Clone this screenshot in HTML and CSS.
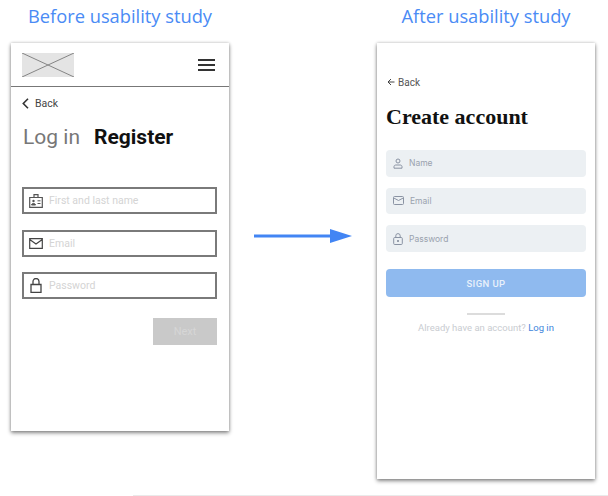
FILE: index.html
```html
<!DOCTYPE html>
<html lang="en">
<head>
    <meta charset="UTF-8">
    <meta name="viewport" content="width=device-width, initial-scale=1.0">
    <title>Before and after usability study</title>
    <link rel="stylesheet" href="styles.css">
</head>
<body>

<div class="board">
    <!-- Before: wireframe -->
    <section class="study">
        <h2 class="study-title">Before usability study</h2>
        <div class="phone phone-before">
            <div class="wire-header">
                <svg class="wire-logo" width="52" height="24" viewBox="0 0 52 24">
                    <rect width="52" height="24" fill="#e4e4e4"/>
                    <path d="M0 0L52 24M0 24L52 0" stroke="#858585" stroke-width="1" fill="none"/>
                </svg>
                <svg class="wire-menu" width="18" height="14" viewBox="0 0 18 14">
                    <path d="M0 2H17M0 7H17M0 12H17" stroke="#333" stroke-width="2" fill="none"/>
                </svg>
            </div>
            <div class="wire-body">
                <div class="wire-back">
                    <svg width="7" height="11" viewBox="0 0 7 11">
                        <path d="M6 .8L1.300 5.500 6 10.200" stroke="#333" stroke-width="1.600" fill="none"/>
                    </svg>
                    <span>Back</span>
                </div>
                <div class="wire-tabs">
                    <span class="wire-tab">Log in</span>
                    <span class="wire-tab wire-tab-active">Register</span>
                </div>
                <div class="wire-form">
                    <div class="wire-field">
                        <svg width="14" height="15" viewBox="0 0 14 15">
                            <path d="M.7 4.500h12.600v9.800H.7zM5 4.500V1.600h4v2.900" stroke="#555" stroke-width="1.200" fill="none"/>
                            <circle cx="4.500" cy="8" r="1.200" fill="#555"/>
                            <path d="M2.500 12c0-2 4-2 4 0zM8.500 7.800h3M8.500 10.500h3" stroke="#555" stroke-width="1" fill="#555"/>
                        </svg>
                        <span>First and last name</span>
                    </div>
                    <div class="wire-field">
                        <svg width="14" height="11" viewBox="0 0 14 11">
                            <path d="M.7.700h12.600v9.600H.7zM.7 1.500L7 6l6.300-4.500" stroke="#444" stroke-width="1.200" fill="none"/>
                        </svg>
                        <span>Email</span>
                    </div>
                    <div class="wire-field">
                        <svg width="12" height="15" viewBox="0 0 12 15">
                            <path d="M1 6.500h10v7.800H1zM3 6.500V3.500a3 3 0 0 1 6 0v3" stroke="#444" stroke-width="1.300" fill="none"/>
                        </svg>
                        <span>Password</span>
                    </div>
                </div>
                <div class="wire-actions">
                    <button class="wire-next">Next</button>
                </div>
            </div>
        </div>
    </section>

    <div class="arrow-col">
        <svg width="98" height="14" viewBox="0 0 98 14">
            <path d="M0 5.500h76v3H0z" fill="#4285f4"/>
            <path d="M76 0l22 7-22 7z" fill="#4285f4"/>
        </svg>
    </div>

    <!-- After: hi-fi -->
    <section class="study">
        <h2 class="study-title">After usability study</h2>
        <div class="phone phone-after">
            <div class="back-link">
                <svg width="8" height="8" viewBox="0 0 8 8">
                    <path d="M7.500 4H1M4 1L1 4l3 3" stroke="#444" stroke-width="1" fill="none"/>
                </svg>
                <span>Back</span>
            </div>
            <h1 class="after-heading">Create account</h1>
            <div class="after-form">
                <div class="after-field">
                    <svg width="10" height="11" viewBox="0 0 10 11">
                        <circle cx="5" cy="3" r="2" stroke="#8a93a3" fill="none"/>
                        <path d="M1 10.200V8.500c0-1 1-1.500 2-1.500h4c1 0 2 .5 2 1.500v1.700z" stroke="#8a93a3" fill="none"/>
                    </svg>
                    <span>Name</span>
                </div>
                <div class="after-field">
                    <svg width="11" height="9" viewBox="0 0 11 9">
                        <rect x=".5" y=".5" width="10" height="8" rx="1" stroke="#8a93a3" fill="none"/>
                        <path d="M.8 2l4.700 2.500L10.200 2" stroke="#8a93a3" fill="none"/>
                    </svg>
                    <span>Email</span>
                </div>
                <div class="after-field">
                    <svg width="10" height="12" viewBox="0 0 10 12">
                        <rect x=".7" y="4.500" width="8.600" height="7" rx="1" stroke="#8a93a3" fill="none"/>
                        <path d="M2.800 4.500V2.800a2.200 2.200 0 0 1 4.400 0v1.700" stroke="#8a93a3" fill="none"/>
                        <circle cx="5" cy="8" r="1" fill="#7b8494"/>
                    </svg>
                    <span>Password</span>
                </div>
            </div>
            <button class="signup">SIGN UP</button>
            <div class="divider"></div>
            <p class="have-account">Already have an account? <a class="login-link" href="#">Log in</a></p>
        </div>
    </section>
</div>

<div class="bottom-line"></div>

</body>
</html>
```

FILE: styles.css
```css
* {
    box-sizing: border-box;
}
html, body {
    margin: 0;
    height: 100%;
    overflow: hidden;
}
body {
    background: #fff;
    font-family: Roboto, Arial, sans-serif;
    display: flex;
    flex-direction: column;
    justify-content: space-between;
}
.board {
    display: flex;
    padding-left: 11px;
}
.study {
    width: 218px;
}
.study-title {
    margin: 0;
    height: 43px;
    padding-top: 3px;
    font-family: "Open Sans", sans-serif;
    font-size: 18.300px;
    line-height: 25px;
    font-weight: 400;
    color: #4a8bf5;
    text-align: center;
    white-space: nowrap;
}
.phone {
    background: #fff;
    box-shadow: 0 2px 4px rgba(0, 0, 0, 0.45), 0 0 3px rgba(0, 0, 0, 0.2);
}
.phone-before {
    height: 388px;
}
.phone-after {
    height: 436px;
    padding: 33px 9px 0;
}

/* before */
.wire-header {
    height: 44px;
    padding: 10px 13px 0 11px;
    display: flex;
    justify-content: space-between;
    align-items: flex-start;
    border-bottom: 1px solid #777;
}
.wire-menu {
    margin-top: 5px;
}
.wire-body {
    padding: 0 12px 0 11px;
}
.wire-back {
    display: flex;
    align-items: center;
    gap: 6px;
    margin-top: 9px;
    height: 14px;
    font-size: 10.500px;
    color: #444;
}
.wire-tabs {
    display: flex;
    gap: 14px;
    margin: 14px 0 0 1px;
    line-height: 26px;
    font-size: 21px;
    color: #777;
}
.wire-tab-active {
    font-weight: 700;
    color: #111;
}
.wire-form {
    display: flex;
    flex-direction: column;
    gap: 15.500px;
    margin-top: 37px;
}
.wire-field {
    height: 27px;
    border: 2px solid #7a7a7a;
    display: flex;
    align-items: center;
    padding-left: 5px;
    font-size: 10.500px;
    color: #d4d4d4;
}
.wire-field svg {
    flex: none;
    margin-right: 6px;
}
.wire-field:nth-child(3) svg {
    margin-left: 1px;
    margin-right: 7px;
}
.wire-actions {
    display: flex;
    justify-content: flex-end;
    margin-top: 19px;
}
.wire-next {
    width: 64px;
    height: 27px;
    border: 0;
    background: #c9c9c9;
    color: #d6d6d6;
    font-family: Roboto, Arial, sans-serif;
    font-size: 11px;
}

/* arrow */
.arrow-col {
    width: 148px;
    padding: 228px 0 0 25px;
}

/* after */
.back-link {
    display: flex;
    align-items: center;
    gap: 3px;
    height: 12px;
    margin-left: 1px;
    font-size: 10px;
    color: #555;
}
.after-heading {
    margin: 14px 0 0;
    font-family: "Liberation Serif", serif;
    font-size: 22px;
    line-height: 30px;
    font-weight: 700;
    color: #111;
    white-space: nowrap;
}
.after-form {
    display: flex;
    flex-direction: column;
    gap: 11px;
    margin-top: 18px;
}
.after-field {
    height: 26.670px;
    background: #ecf0f3;
    border-radius: 4px;
    display: flex;
    align-items: center;
    padding-left: 7px;
    font-family: Inter, sans-serif;
    font-size: 8.500px;
    color: #9aa2ae;
}
.after-field svg {
    flex: none;
    margin-right: 6px;
}
.signup {
    display: block;
    width: 200px;
    height: 28px;
    margin-top: 17px;
    padding-top: 2px;
    border: 0;
    border-radius: 4px;
    background: #8fbaef;
    color: #e9f1fb;
    font-family: Roboto, Arial, sans-serif;
    font-size: 9.500px;
    font-weight: 500;
    letter-spacing: 0.4px;
}
.divider {
    width: 38px;
    height: 2px;
    margin: 16px auto 0;
    background: #dcdcdc;
}
.have-account {
    margin: 6px 0 0;
    text-align: center;
    font-size: 9.500px;
    line-height: 13px;
    color: #c9ccd1;
}
.login-link {
    color: #3f86dc;
    text-decoration: none;
}

.bottom-line {
    height: 1px;
    margin-left: 133px;
    background: #eaeaea;
}
```
